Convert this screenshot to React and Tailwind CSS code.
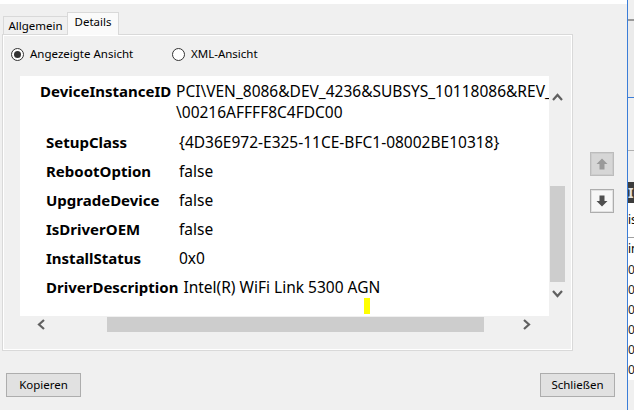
import React from "react";

const F = { fontFamily: '"Noto Sans", "Open Sans", sans-serif' };

function ChevUp() {
  return (
    <svg width="11" height="8" viewBox="0 0 11 8" className="block">
      <polyline points="1,7 5.5,2 10,7" fill="none" stroke="#606060" strokeWidth="2.2" />
    </svg>
  );
}
function ChevDown() {
  return (
    <svg width="11" height="8" viewBox="0 0 11 8" className="block">
      <polyline points="1,1 5.5,6 10,1" fill="none" stroke="#606060" strokeWidth="2.2" />
    </svg>
  );
}
function ChevLeft() {
  return (
    <svg width="8" height="11" viewBox="0 0 8 11" className="block">
      <polyline points="7,1 2,5.5 7,10" fill="none" stroke="#606060" strokeWidth="2.2" />
    </svg>
  );
}
function ChevRight() {
  return (
    <svg width="8" height="11" viewBox="0 0 8 11" className="block">
      <polyline points="1,1 6,5.5 1,10" fill="none" stroke="#606060" strokeWidth="2.2" />
    </svg>
  );
}

function BlockArrow({ up, color }) {
  return (
    <svg width="12" height="12" viewBox="0 0 12 12" className="block">
      {up ? (
        <polygon points="6,0.5 11.5,6 8.5,6 8.5,11.5 3.5,11.5 3.5,6 0.5,6" fill={color} />
      ) : (
        <polygon points="6,11.5 11.5,6 8.5,6 8.5,0.5 3.5,0.5 3.5,6 0.5,6" fill={color} />
      )}
    </svg>
  );
}

function Row({ label, value }) {
  return (
    <div className="flex h-[29px] items-center pl-[26px] whitespace-nowrap">
      <div className="w-[133px] shrink-0 font-bold text-[15px]">{label}</div>
      <div>{value}</div>
    </div>
  );
}

export default function App() {
  return (
    <div className="flex w-[634px] h-[410px] overflow-hidden bg-[#f0f0f0] text-black" style={F}>
      <div className="w-[627px] flex flex-col">
        <div className="h-[4px] bg-white" />
        <div className="flex">
          <div className="ml-[2px] w-[571px] flex flex-col">
            {/* tabs */}
            <div className="h-[30px] flex items-end pl-[1px] text-[11.5px]">
              <div className="h-[18px] w-[64px] border-l border-t border-[#d9d9d9] flex items-center justify-center leading-none pt-[1px]">
                Allgemein
              </div>
              <div className="relative z-10 -mb-px h-[23px] w-[52px] border-l border-t border-r border-[#d9d9d9] bg-[#fafafa] flex items-start justify-center pt-[3px] leading-none">
                Details
              </div>
            </div>
            {/* panel */}
            <div className="h-[317px] border border-[#d9d9d9] shadow-[inset_1px_1px_0_#ffffff,inset_-1px_-1px_0_#ffffff] flex flex-col">
              <div className="flex items-center h-[16px] mt-[11px] ml-[8px] text-[11.5px]">
                <div className="flex items-center w-[161px]">
                  <div className="w-[13px] h-[13px] rounded-full border border-[#333] bg-white flex items-center justify-center">
                    <div className="w-[7px] h-[7px] rounded-full bg-[#333]" />
                  </div>
                  <span className="ml-[6px]">Angezeigte Ansicht</span>
                </div>
                <div className="flex items-center">
                  <div className="w-[13px] h-[13px] rounded-full border border-[#333] bg-white" />
                  <span className="ml-[6px]">XML-Ansicht</span>
                </div>
              </div>
              {/* scroll area */}
              <div className="mt-[14px] ml-[17px] w-[546px] flex flex-col">
                <div className="flex">
                  <div className="relative w-[529px] h-[240px] bg-white overflow-hidden text-[15.5px] whitespace-nowrap">
                    <div className="flex pt-[5px] pl-[20px] leading-[21px]">
                      <div className="w-[136px] shrink-0 font-bold text-[15px]">DeviceInstanceID</div>
                      <div>
                        <div>PCI\VEN_8086&amp;DEV_4236&amp;SUBSYS_10118086&amp;REV_00</div>
                        <div>\00216AFFFF8C4FDC00</div>
                      </div>
                    </div>
                    <div className="mt-[5px]">
                      <Row label="SetupClass" value="{4D36E972-E325-11CE-BFC1-08002BE10318}" />
                      <Row label="RebootOption" value="false" />
                      <Row label="UpgradeDevice" value="false" />
                      <Row label="IsDriverOEM" value="false" />
                      <Row label="InstallStatus" value="0x0" />
                      <div className="flex h-[29px] items-center pl-[26px]">
                        <div className="shrink-0 font-bold text-[15px] mr-[5px]">DriverDescription</div>
                        <div>Intel(R) WiFi Link 5300 AGN</div>
                      </div>
                    </div>
                    <div className="absolute left-[344px] top-[222px] w-[6px] h-[16px] bg-[#ffff00]" />
                  </div>
                  <div className="w-[17px] flex flex-col items-center">
                    <div className="mt-[17px]"><ChevUp /></div>
                    <div className="mt-[85px] w-[15px] h-[96px] bg-[#cdcdcd]" />
                    <div className="mt-[8px]"><ChevDown /></div>
                  </div>
                </div>
                <div className="h-[17px] flex items-center">
                  <div className="ml-[17px]"><ChevLeft /></div>
                  <div className="ml-[62px] w-[377px] h-[15px] bg-[#cdcdcd]" />
                  <div className="ml-[39px]"><ChevRight /></div>
                </div>
              </div>
            </div>
          </div>
          {/* right arrow buttons */}
          <div className="ml-[17px] flex flex-col">
            <div className="mt-[148px] w-[24px] h-[24px] border border-[#bcbcbc] bg-[#cccccc] flex items-center justify-center">
              <div className="w-[20px] h-[20px] bg-[#d6d6d6] flex items-center justify-center">
                <BlockArrow up color="#9a9a9a" />
              </div>
            </div>
            <div className="mt-[13px] w-[24px] h-[24px] border border-[#adadad] bg-[#e1e1e1] flex items-center justify-center">
              <div className="w-[20px] h-[20px] bg-[#f7f7f7] flex items-center justify-center">
                <BlockArrow color="#505050" />
              </div>
            </div>
          </div>
        </div>
        {/* bottom buttons */}
        <div className="mt-[22px] flex justify-between px-[6px] pr-[12px] text-[11.5px]">
          <div className="w-[75px] h-[24px] border border-[#adadad] bg-[#e1e1e1] flex items-center justify-center">Kopieren</div>
          <div className="w-[75px] h-[24px] border border-[#adadad] bg-[#e1e1e1] flex items-center justify-center">Schließen</div>
        </div>
      </div>
      <div className="w-px bg-[#3b7dd8]" />
      {/* background window strip */}
      <div className="flex-1 flex flex-col text-[12px] leading-none overflow-hidden">
        <div className="h-[19px] bg-[#f0f0f0]" />
        <div className="h-[2px] bg-[#9a9a9a]" />
        <div className="h-[76px] bg-[#ebebeb]" />
        <div className="h-px bg-[#3b7dd8]" />
        <div className="h-[52px] bg-[#f0f0f0]" />
        <div className="h-px bg-[#b0b0b0]" />
        <div className="h-[31px] bg-[#f0f0f0]" />
        <div className="h-[21px] bg-[#3c3c3c] text-[#e0e0e0] flex items-center text-[14px] font-bold">IC</div>
        <div className="h-[34px] bg-white flex items-center">is</div>
        <div className="h-px bg-[#a0a0a0]" />
        <div className="h-[22px] bg-white flex items-center">in</div>
        <div className="bg-white flex flex-col text-[#222]">
          <div className="h-[20px] flex items-center">0.</div>
          <div className="h-[20px] flex items-center">0.</div>
          <div className="h-[20px] flex items-center">0.</div>
          <div className="h-[20px] flex items-center">0.</div>
          <div className="h-[20px] flex items-center">0.</div>
          <div className="h-[20px] flex items-center">0.</div>
        </div>
      </div>
    </div>
  );
}
